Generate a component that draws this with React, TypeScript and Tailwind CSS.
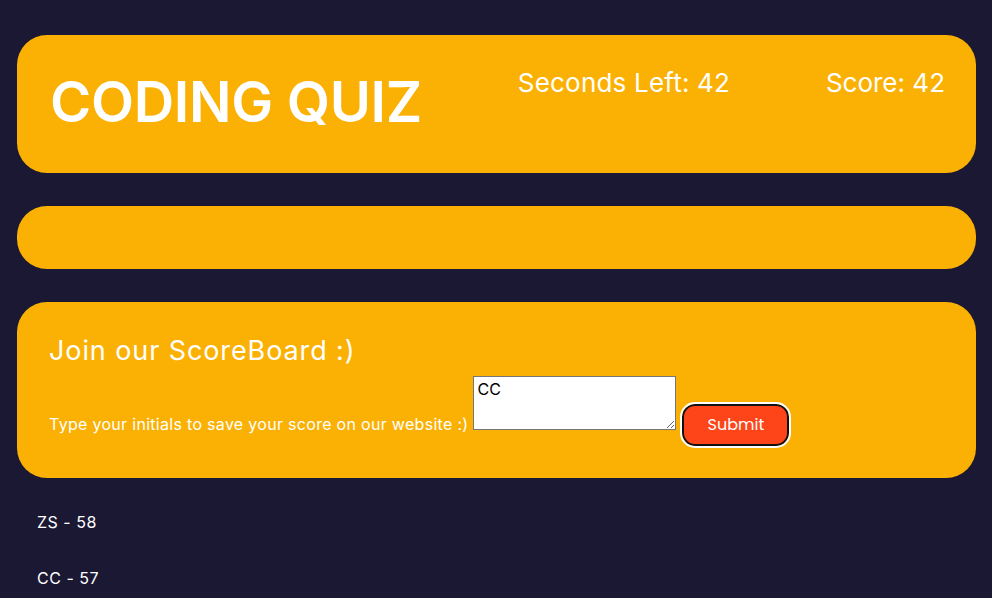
export default function App() {
  const scores = [
    { name: "ZS", score: 58 },
    { name: "CC", score: 57 },
  ];

  return (
    <div
      className="min-h-[598px] bg-[#1b1833] pl-[17px] pr-[16px] pt-[35px] text-white"
      style={{ fontFamily: "Inter, 'Open Sans', sans-serif" }}
    >
      {/* header */}
      <header className="flex h-[138px] items-start justify-between rounded-[30px] bg-[#fbb104] pl-[33px] pr-[31px]">
        <h1 className="mt-[35px] text-[56px] font-semibold leading-[64px] tracking-[-0.3px]">CODING QUIZ</h1>
        <p className="mt-[32px] text-[26px] leading-[32px] tracking-[0.2px]">Seconds Left: 42</p>
        <p className="mt-[32px] text-[26px] leading-[32px]">Score: 42</p>
      </header>

      {/* question area */}
      <section className="mt-[33px] h-[63px] rounded-[30px] bg-[#fbb104]" />

      {/* scoreboard form */}
      <section className="mt-[33px] h-[176px] rounded-[30px] bg-[#fbb104] px-[32px] pt-[32px]">
        <h2 className="text-[27px] leading-[34px] tracking-[0.9px]">Join our ScoreBoard :)</h2>
        <form className="mt-[8px] text-[16px] leading-[20px] tracking-[0.3px]">
          <label htmlFor="initials">Type your initials to save your score on our website :)</label>
          <textarea
            id="initials"
            defaultValue="CC"
            className="ml-[5px] h-[54px] w-[203px] border border-[#767676] bg-white px-[3px] py-[3px] align-baseline text-[16px] leading-[18px] tracking-normal text-black"
          />
          <button
            type="button"
            className="ml-[6px] h-[42px] w-[107px] rounded-[13px] border-2 border-[#111] bg-[#fe4519] align-baseline text-[16px] tracking-normal text-white outline-2 outline-white"
            style={{ fontFamily: "Poppins, Lato, sans-serif", outlineStyle: "solid" }}
          >
            Submit
          </button>
        </form>
      </section>

      {/* saved scores */}
      <ul className="mt-[34px] pl-[20px] text-[16px] leading-[20px] tracking-[0.5px]">
        {scores.map((s) => (
          <li key={s.name} className="mb-[36px]">
            {s.name} - {s.score}
          </li>
        ))}
      </ul>
    </div>
  );
}
